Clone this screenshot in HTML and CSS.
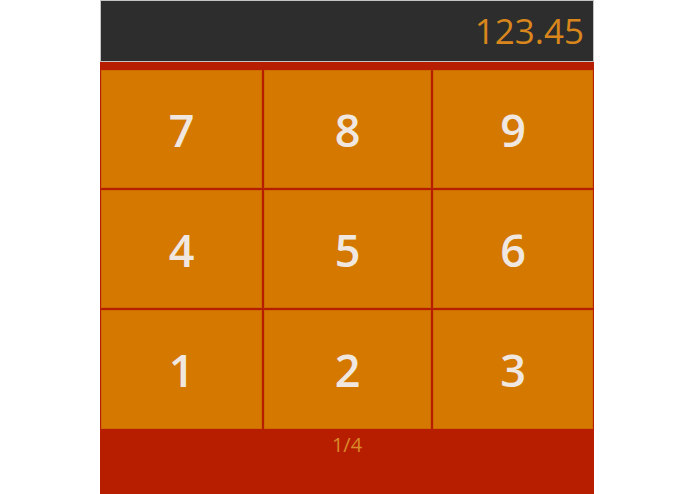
FILE: index.html
```html
<!DOCTYPE html>
<html lang="en">
<head>
  <meta charset="UTF-8" />
  <meta name="viewport" content="width=device-width, initial-scale=1" />
  <title>Keypad</title>
  <link rel="stylesheet" href="styles.css">
</head>
<body>
  <div class="app">
    <div class="display">123.45</div>
    <div class="panel">
      <div class="keys">
        <button class="key">7</button>
        <button class="key">8</button>
        <button class="key">9</button>
        <button class="key">4</button>
        <button class="key">5</button>
        <button class="key">6</button>
        <button class="key">1</button>
        <button class="key">2</button>
        <button class="key">3</button>
      </div>
      <div class="pager">1/4</div>
    </div>
  </div>
</body>
</html>
```

FILE: styles.css
```css
body {
  margin: 0;
  padding-left: 100px;
  background: #fff;
  font-family: "Open Sans", "Noto Sans", sans-serif;
}

.app {
  width: 494px;
  height: 494px;
  display: flex;
  flex-direction: column;
  background: #b71e00;
}

.display {
  height: 60px;
  box-sizing: content-box;
  border: 1px solid #c4c4c4;
  background: #2d2d2d;
  color: #d9871c;
  font-size: 35px;
  line-height: 60px;
  text-align: right;
  padding-right: 9px;
}

.panel {
  flex: 1;
  padding: 8px 1px 0;
  display: flex;
  flex-direction: column;
}

.keys {
  display: grid;
  grid-template-columns: 161px 167px 160px;
  grid-template-rows: 118px 118px 119px;
  gap: 2px;
}

.key {
  border: none;
  margin: 0;
  padding: 0;
  background: #d47800;
  box-shadow: inset 0 0 0 1px #cd6a00;
  color: #f0e8e0;
  font-family: "Open Sans", "Noto Sans", sans-serif;
  font-size: 45px;
  font-weight: 600;
}

.pager {
  text-align: center;
  color: #d98a2a;
  font-size: 20px;
  line-height: 20px;
  padding-top: 6px;
}
```
